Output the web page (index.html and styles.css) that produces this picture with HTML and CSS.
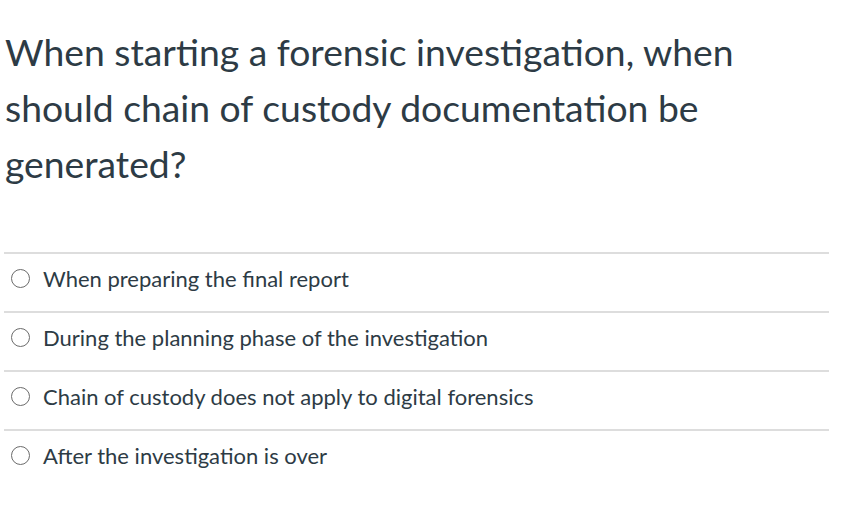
FILE: index.html
```html
<!DOCTYPE html>
<html>
<head>
<meta charset="utf-8">
<link rel="stylesheet" href="styles.css">
</head>
<body>
<div class="quiz">
  <div class="question">When starting a forensic investigation, when should chain of custody documentation be generated?</div>
  <div class="answers">
    <label class="answer"><span class="radio"></span><span class="text">When preparing the final report</span></label>
    <label class="answer"><span class="radio"></span><span class="text">During the planning phase of the investigation</span></label>
    <label class="answer"><span class="radio"></span><span class="text">Chain of custody does not apply to digital forensics</span></label>
    <label class="answer"><span class="radio"></span><span class="text">After the investigation is over</span></label>
  </div>
</div>
</body>
</html>
```
FILE: styles.css
```css
html, body {
  margin: 0;
  padding: 0;
  background: #ffffff;
}
.quiz {
  width: 825px;
  margin-left: 4px;
  padding-top: 24px;
  font-family: Lato, "Open Sans", sans-serif;
  color: #2d3b45;
}
.question {
  font-size: 37.3px;
  line-height: 56px;
  padding-left: 1px;
  padding-right: 40px;
}
.answers {
  margin-top: 60px;
  border-top: 2px solid #dddddd;
}
.answer {
  display: flex;
  align-items: center;
  gap: 13px;
  height: 49px;
  padding-bottom: 8px;
  border-bottom: 2px solid #dddddd;
  padding-left: 7px;
  font-size: 22px;
}
.answer:last-child {
  border-bottom: none;
}
.radio {
  width: 17px;
  height: 17px;
  border: 1px solid #6b6b6b;
  border-radius: 50%;
  flex: none;
  background: #fff;
}
.text {
  line-height: 26px;
}
```
